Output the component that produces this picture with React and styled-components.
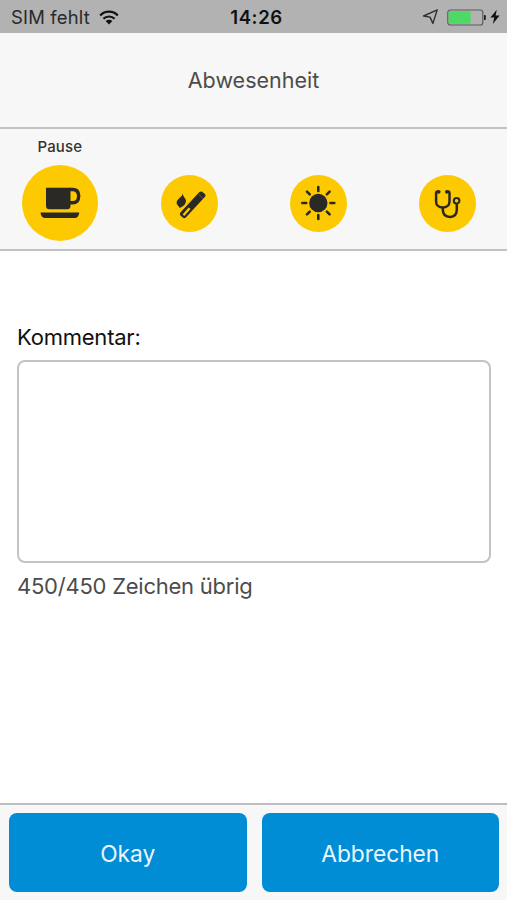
import React, { useState } from 'react';
import styled, { createGlobalStyle } from 'styled-components';

const MAX_LENGTH = 450;

const GlobalStyle = createGlobalStyle`
  * {
    box-sizing: border-box;
  }

  body {
    margin: 0;
    background: #ffffff;
    font-family: Inter, "Liberation Sans", sans-serif;
  }
`;

const Screen = styled.div`
  display: flex;
  flex-direction: column;
  height: 100vh;
  background: #ffffff;
`;

const StatusBar = styled.div`
  display: grid;
  grid-template-columns: 1fr auto 1fr;
  align-items: center;
  flex: none;
  height: 33px;
  padding: 1px 7px 0 11px;
  background: #b2b2b2;
  color: #111111;
`;

const Carrier = styled.div`
  display: flex;
  align-items: center;
  gap: 9px;
  font-size: 18.4px;
  letter-spacing: 0.2px;
  white-space: nowrap;
  color: #2a2a2a;
`;

const Clock = styled.div`
  font-size: 18.6px;
  font-weight: 600;
  letter-spacing: 0.6px;
  padding-left: 2px;
`;

const StatusIcons = styled.div`
  display: flex;
  align-items: center;
  justify-content: flex-end;
  gap: 3px;

  svg:first-child {
    margin-right: 5px;
  }
`;

const Header = styled.header`
  display: flex;
  align-items: center;
  justify-content: center;
  flex: none;
  height: 96px;
  background: #f7f7f7;
  border-bottom: 2px solid #c2c2c2;
`;

const Title = styled.h1`
  margin: 0;
  font-size: 21.5px;
  font-weight: 400;
  letter-spacing: 0;
  color: #4c4c4c;
`;

const ReasonBar = styled.div`
  display: grid;
  grid-template-columns: repeat(4, 128.9px);
  flex: none;
  height: 122px;
  background: #f7f7f7;
  border-bottom: 2px solid #c2c2c2;
  overflow: hidden;
`;

const ReasonItem = styled.div`
  display: flex;
  flex-direction: column;
  align-items: center;
  width: 120.8px;
`;

const ReasonLabel = styled.div`
  height: 36.4px;
  padding: 8px 1px 0 0;
  font-size: 15px;
  font-weight: 500;
  line-height: 20px;
  letter-spacing: 0.2px;
  color: #333333;
`;

const ReasonButton = styled.button`
  display: flex;
  align-items: center;
  justify-content: center;
  width: ${props => props.$active ? '76px' : '57px'};
  height: ${props => props.$active ? '76px' : '57px'};
  margin-top: ${props => props.$active ? '0' : '9.5px'};
  padding: 0;
  border: 0;
  border-radius: 50%;
  background: #fdc900;
  color: #2b2926;
  cursor: pointer;
`;

const Content = styled.main`
  flex: 1;
  padding: 73px 16px 0 17px;
`;

const Label = styled.label`
  display: block;
  height: 36px;
  font-size: 22px;
  line-height: 26px;
  letter-spacing: -0.22px;
  color: #111111;
`;

const CommentBox = styled.textarea`
  display: block;
  width: 100%;
  height: 203px;
  padding: 10px;
  border: 2px solid #c3c3c3;
  border-radius: 8px;
  outline: none;
  resize: none;
  background: #ffffff;
  font: inherit;
  font-size: 22px;
`;

const Counter = styled.div`
  margin-top: 10px;
  font-size: 22px;
  line-height: 26px;
  letter-spacing: -0.24px;
  color: #4c4c4c;
`;

const Footer = styled.footer`
  display: grid;
  grid-template-columns: 1fr 1fr;
  gap: 15px;
  flex: none;
  height: 97px;
  padding: 8px 8px 8px 9px;
  background: #f7f7f7;
  border-top: 2px solid #bdbdbd;
`;

const ActionButton = styled.button`
  padding: 1px 0 0;
  border: 0;
  border-radius: 8px;
  background: #008dd6;
  color: #e9f6fd;
  font-family: inherit;
  font-size: 22.8px;
  letter-spacing: -0.05px;
  cursor: pointer;
`;

const WifiIcon = () => (
  <svg width="20" height="15" viewBox="0 0 20 15" fill="none" stroke="#111111" strokeWidth="2.2">
    <path d="M1.2 5.4C6 0.3 14 0.3 18.8 5.4" />
    <path d="M4.4 8.8C7.5 5.7 12.5 5.7 15.6 8.8" />
    <path d="M10 14.4L6.6 11.1Q10 8.2 13.4 11.1Z" fill="#111111" stroke="none" />
  </svg>
);

const LocationIcon = () => (
  <svg width="17" height="16" viewBox="0 0 17 16" fill="none" stroke="#303030" strokeWidth="1.4" strokeLinejoin="round">
    <path d="M15.2 0.9L1.6 7L8 8.1L10.9 14.4Z" />
  </svg>
);

const BatteryIcon = () => (
  <svg width="40" height="17" viewBox="0 0 40 17">
    <rect x="0.8" y="1" width="35" height="15" rx="2.6" fill="none" stroke="#5d5d5d" strokeWidth="1.2" />
    <rect x="1.6" y="2.2" width="22" height="12.6" rx="1.2" fill="#4cd964" />
    <path d="M37 6h0.8q1 0 1 1v3q0 1 -1 1H37z" fill="#1c1c1c" />
  </svg>
);

const BoltIcon = () => (
  <svg width="10" height="16" viewBox="0 0 10 16" fill="#111111">
    <path d="M6.8 0.8L0.4 8.6H4.3L2.8 15L9.6 6.6H5.6Z" />
  </svg>
);

const CupIcon = () => (
  <svg width="44" height="44" viewBox="-22.5 -21.7 44 44" fill="currentColor">
    <path d="M-14.5 -15H10V3Q10 6.5 6.5 6.5H-11Q-14.5 6.5 -14.5 3Z" />
    <path d="M9 -13.2H12Q18.2 -13.2 18.2 -6.6Q18.2 0 12 0H9" fill="none" stroke="currentColor" strokeWidth="3.4" />
    <path d="M-20 9.8H18.8Q18 15.3 14 15.3H-15Q-19.4 15.3 -20 9.8Z" />
  </svg>
);

const CigaretteIcon = () => (
  <svg width="36" height="36" viewBox="-18.6 -18 36 36" fill="currentColor">
    <path
      d="M9.8 -10.9Q11.2 -12.1 12.6 -11.2L15.6 -8.8Q16.6 -7.6 15.4 -6.2L-3.8 14.4Q-5.2 15.8 -6.8 14.6L-9.2 12.4Q-10.4 11 -9.2 9.6ZM-7 11.6L-5.3 12.9L0.9 5.9L-0.9 4.5Z"
      fillRule="evenodd"
    />
    <path d="M9 -8.6L13.4 -4.8" stroke="#8b7512" strokeWidth="0.6" />
    <path d="M-7 -10C-6.6 -5.9 -13 -4.4 -13 -0.2C-13 2.2 -11 2.6 -9.9 4.9C-7.5 4.4 -3.4 1.4 -3.6 -2.2C-3.8 -5 -6.6 -5.8 -7 -10Z" />
  </svg>
);

const SunIcon = () => (
  <svg width="36" height="36" viewBox="-18.3 -18 36 36" fill="currentColor">
    <circle r="9.2" />
    {[0, 45, 90, 135, 180, 225, 270, 315].map(angle => (
      <path
        key={angle}
        d="M12.1 0H16"
        transform={`rotate(${angle})`}
        stroke="currentColor"
        strokeWidth="2.6"
        strokeLinecap="round"
      />
    ))}
  </svg>
);

const StethoscopeIcon = () => (
  <svg width="36" height="36" viewBox="-18.5 -17.6 36 36" fill="none" stroke="currentColor" strokeWidth="2.5">
    <path d="M-9 -11H-9.8Q-11.4 -11 -11.4 -9.2V-1.2C-11.4 2.7 -8.6 4.8 -4.7 4.8S2 2.7 2 -1.2V-9.2Q2 -11 0.4 -11H-0.4" />
    <path d="M-4.7 4.8V7C-4.7 12.2 -1.8 14.4 2.6 14.4S9.3 11.5 9.3 7V1.2" />
    <circle cx="9.1" cy="-1.8" r="2.8" strokeWidth="2.1" />
    <circle cx="-8.8" cy="-10.8" r="1.9" fill="currentColor" stroke="none" />
    <circle cx="-0.6" cy="-10.8" r="1.9" fill="currentColor" stroke="none" />
  </svg>
);

const reasons = [
  { name: 'Pause', Icon: CupIcon },
  { name: 'Raucherpause', Icon: CigaretteIcon },
  { name: 'Urlaub', Icon: SunIcon },
  { name: 'Arzt', Icon: StethoscopeIcon }
];

function App() {
  const [selected, setSelected] = useState('Pause');
  const [comment, setComment] = useState('');

  return (
    <>
      <GlobalStyle />
      <Screen>
        <StatusBar>
          <Carrier>
            SIM fehlt
            <WifiIcon />
          </Carrier>
          <Clock>14:26</Clock>
          <StatusIcons>
            <LocationIcon />
            <BatteryIcon />
            <BoltIcon />
          </StatusIcons>
        </StatusBar>

        <Header>
          <Title>Abwesenheit</Title>
        </Header>

        <ReasonBar>
          {reasons.map(({ name, Icon }) => (
            <ReasonItem key={name}>
              <ReasonLabel>{selected === name ? name : ''}</ReasonLabel>
              <ReasonButton $active={selected === name} onClick={() => setSelected(name)}>
                <Icon />
              </ReasonButton>
            </ReasonItem>
          ))}
        </ReasonBar>

        <Content>
          <Label htmlFor="comment">Kommentar:</Label>
          <CommentBox
            id="comment"
            maxLength={MAX_LENGTH}
            value={comment}
            onChange={e => setComment(e.target.value)}
          />
          <Counter>{MAX_LENGTH - comment.length}/{MAX_LENGTH} Zeichen übrig</Counter>
        </Content>

        <Footer>
          <ActionButton>Okay</ActionButton>
          <ActionButton>Abbrechen</ActionButton>
        </Footer>
      </Screen>
    </>
  );
}

export default App;
